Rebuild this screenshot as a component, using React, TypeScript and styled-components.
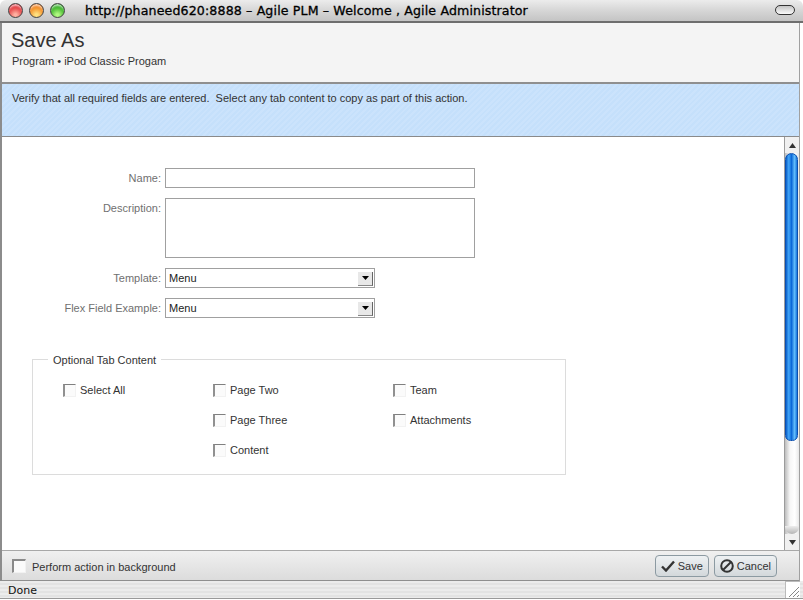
import React from "react";
import styled, { createGlobalStyle } from "styled-components";

const Global = createGlobalStyle`
  html, body { margin: 0; padding: 0; background: #fff; overflow: hidden; }
  body { font-family: "Liberation Sans", Arial, sans-serif; }
  * { box-sizing: border-box; }
`;

const Window = styled.div`
  width: 803px; height: 600px; display: flex; flex-direction: column;
  background: #fff; overflow: hidden; padding: 0 3px 1px 0;
`;
const TitleBar = styled.div`
  height: 23px; flex: none; margin-right: -3px; display: flex; align-items: center; padding: 0 7px 1px 8px;
  background: linear-gradient(#ececec, #d8d8d8 45%, #c4c4c4);
  border-bottom: 2px solid #6e6e6e; border-radius: 6px 6px 0 0;
`;
const Light = styled.span<{ $c: string; $d: string }>`
  width: 15px; height: 15px; border-radius: 50%; margin-right: 6px; flex: none;
  border: 1px solid #444;
  background: radial-gradient(circle at 50% 85%, ${p => p.$c} 10%, ${p => p.$d} 80%);
  box-shadow: inset 0 3px 2px -1px rgba(255,255,255,.7);
`;
const TitleText = styled.span`
  margin-left: 14px; font: 12.6px "DejaVu Sans", sans-serif; color: #000; letter-spacing: .13px;
  -webkit-text-stroke: .3px #000; white-space: nowrap; flex: 1;
`;
const Pill = styled.span`
  width: 20px; height: 10px; border: 1.5px solid #333; border-radius: 5px;
  background: linear-gradient(#c4c4c4, #fafafa); margin-right: 1px;
`;
const Inner = styled.div`
  flex: 1; display: flex; flex-direction: column; min-height: 0;
  border-left: 2px solid #8c8c8c; border-right: 1px solid #a0a0a0;
`;
const Header = styled.header`
  height: 61px; flex: none; background: #f4f4f4; padding: 5px 0 0 9px; border-bottom: 2px solid #8f8f8f;
`;
const Title = styled.h1`
  margin: 0; font-size: 20px; font-weight: 400; line-height: 24px; color: #333;
`;
const Crumb = styled.div`
  margin: 2px 0 0 1px; font-size: 11px; line-height: 14px; color: #333;
`;
const Banner = styled.div`
  height: 53px; flex: none; padding: 7px 10px; font-size: 11px; line-height: 14px; color: #333; white-space: pre;
  background: repeating-linear-gradient(135deg, #c5e0fb 0 2px, #cbe3fc 2px 4px);
  border-bottom: 1px solid #8a8a8a;
`;
const Body = styled.div`
  flex: 1; display: flex; min-height: 0;
`;
const Content = styled.main`
  flex: 1; padding: 31px 0 0 30px; min-width: 0;
`;
const FieldGrid = styled.div`
  display: grid; grid-template-columns: 129px auto; column-gap: 4px; row-gap: 10px; justify-content: start;
`;
const Label = styled.label`
  font-size: 11px; line-height: 20px; color: #707070; text-align: right; white-space: nowrap;
`;
const TextField = styled.div<{ $tall?: boolean }>`
  width: 310px; height: ${p => (p.$tall ? 60 : 20)}px; background: #fff; border: 1px solid #a0a0a0;
`;
const SelectBox = styled.div`
  width: 210px; height: 20px; background: #fff; border: 1px solid #a0a0a0; display: flex; align-items: center;
  justify-content: space-between; padding-left: 3px; font-size: 11px; color: #222; position: relative;
`;
const SelectArrow = styled.span`
  width: 15px; height: 14px; margin: 1px 1px 0 0; display: flex; align-items: center; justify-content: center;
  background: #e8e8e8; border-right: 1px solid #666; border-bottom: 1px solid #888;
`;
const Fieldset = styled.fieldset`
  width: 534px; height: 124px; margin: 33px 0 0; padding: 0; border: 1px solid #dcdcdc; display: block; position: relative;
`;
const Legend = styled.legend`
  margin-left: 15px; padding: 2px 5px 0; font-size: 11px; line-height: 14px; color: #333;
`;
const OptionGrid = styled.div`
  display: grid; grid-template-columns: 150px 180px auto; grid-auto-rows: 30px; padding: 16px 0 0 30px;
`;
const Option = styled.div<{ $col: number }>`
  grid-column: ${p => p.$col}; display: flex; align-items: center; gap: 4px; height: 14px;
  font-size: 11px; color: #333; white-space: nowrap;
`;
const Check = styled.span`
  width: 13px; height: 13px; flex: none; background: #fbfbfb;
  border-top: 1px solid #808080; border-left: 2px solid #909090; border-right: 1px solid #f2f2f2; border-bottom: 1px solid #f2f2f2;
`;
const Scrollbar = styled.aside`
  width: 15px; flex: none; display: flex; flex-direction: column; align-items: center;
  border-left: 1px solid #9c9c9c;
  background: linear-gradient(90deg, #bdbdbd, #f6f6f6 35%, #fff 70%, #e8e8e8);
`;
const ScrollButton = styled.div<{ $down?: boolean }>`
  height: 16px; width: 100%; flex: none; display: flex; align-items: center; justify-content: center; background: #f0f0f0;
  svg { transform: ${p => (p.$down ? "rotate(180deg)" : "none")}; }
`;
const Thumb = styled.div`
  width: 13px; height: 288px; flex: none; margin-right: 1px; border-radius: 7px 7px 6px 6px;
  border: 1px solid #0a4fb0;
  background: linear-gradient(90deg, #0a5ec8, #42a6f8 25%, #0c68d8 50%, #62bdfc 78%, #1673dc);
`;
const ThumbTrack = styled.div`
  flex: 1; width: 100%; display: flex; flex-direction: column; align-items: center;
`;
const TrackEnd = styled.div`
  margin-top: auto; height: 8px; width: 100%; border-radius: 0 0 7px 7px; background: linear-gradient(#ededed, #b4b4b4);
`;
const Footer = styled.footer`
  height: 31px; flex: none; display: flex; align-items: center; padding: 0 22px 0 10px;
  background: linear-gradient(#f0f0f0, #dcdcdc); border-top: 1px solid #a8a8a8; border-bottom: 1px solid #8f8f8f;
`;
const FooterCheck = styled(Check)`
  width: 14px; height: 14px; background: #fbfbfb; border-top: 2px solid #8a8a8a; border-left: 2px solid #8a8a8a;
`;
const FooterLabel = styled.span`
  margin-left: 6px; padding-top: 2px; flex: 1; font-size: 11px; color: #333;
`;
const Btn = styled.button`
  height: 22px; margin-left: 5px; padding: 0 5px; display: flex; align-items: center; gap: 3px;
  font: 11px "Liberation Sans", sans-serif; color: #333; border: 1px solid #8c9aa2; border-radius: 4px;
  background: linear-gradient(#eef1f3, #d3d8db);
`;
const StatusBar = styled.div`
  height: 18px; flex: none; margin-right: -3px; display: flex; align-items: center; justify-content: space-between;
  padding-left: 8px; font: 11px "DejaVu Sans", sans-serif; color: #111;
  background: repeating-linear-gradient(#ececec 0 2px, #e3e3e3 2px 4px);
  border-bottom: 1px solid #9a9a9a;
`;
const StatusText = styled.span`
  padding-top: 2px;
`;
const Grip = styled.span`
  width: 15px; height: 17px; margin-right: 3px; background: #fff; border-left: 1px solid #bbb; border-top: 1px solid #bbb; display: flex;
`;

const Tri = () => (
  <svg width="7" height="5" viewBox="0 0 7 5"><path d="M3.5 0 7 5H0z" fill="#333" /></svg>
);
const ArrowDown = () => (
  <svg width="7" height="4" viewBox="0 0 7 4"><path d="M0 0h7L3.5 4z" fill="#000" /></svg>
);

const options: [number, string][] = [
  [1, "Select All"], [2, "Page Two"], [3, "Team"],
  [2, "Page Three"], [3, "Attachments"], [2, "Content"],
];

export default function App() {
  return (
    <Window>
      <Global />
      <TitleBar>
        <Light $c="#ffb0a0" $d="#d8101c" />
        <Light $c="#ffe080" $d="#ee6a00" />
        <Light $c="#b0f880" $d="#109a08" />
        <TitleText>http://phaneed620:8888 – Agile PLM – Welcome , Agile Administrator</TitleText>
        <Pill />
      </TitleBar>
      <Inner>
        <Header>
          <Title>Save As</Title>
          <Crumb>Program • iPod Classic Progam</Crumb>
        </Header>
        <Banner>Verify that all required fields are entered.  Select any tab content to copy as part of this action.</Banner>
        <Body>
          <Content>
            <FieldGrid>
              <Label>Name:</Label>
              <TextField />
              <Label>Description:</Label>
              <TextField $tall />
              <Label>Template:</Label>
              <SelectBox>Menu<SelectArrow><ArrowDown /></SelectArrow></SelectBox>
              <Label>Flex Field Example:</Label>
              <SelectBox>Menu<SelectArrow><ArrowDown /></SelectArrow></SelectBox>
            </FieldGrid>
            <Fieldset>
              <Legend>Optional Tab Content</Legend>
              <OptionGrid>
                {options.map(([c, t]) => (
                  <Option key={t} $col={c}><Check />{t}</Option>
                ))}
              </OptionGrid>
            </Fieldset>
          </Content>
          <Scrollbar>
            <ScrollButton><Tri /></ScrollButton>
            <ThumbTrack>
              <Thumb />
              <TrackEnd />
            </ThumbTrack>
            <ScrollButton $down><Tri /></ScrollButton>
          </Scrollbar>
        </Body>
        <Footer>
          <FooterCheck />
          <FooterLabel>Perform action in background</FooterLabel>
          <Btn>
            <svg width="14" height="12" viewBox="0 0 14 12"><path d="M1 6.5 5 10.5 13 1.5" fill="none" stroke="#333" strokeWidth="2.4" /></svg>
            Save
          </Btn>
          <Btn>
            <svg width="14" height="14" viewBox="0 0 14 14"><circle cx="7" cy="7" r="5.8" fill="none" stroke="#333" strokeWidth="2" /><path d="M3 11 11 3" stroke="#333" strokeWidth="2" /></svg>
            Cancel
          </Btn>
        </Footer>
      </Inner>
      <StatusBar>
        <StatusText>Done</StatusText>
        <Grip><svg width="14" height="16" viewBox="0 0 14 16"><path d="M3 15 13 5M7 15 13 9M11 15 13 13" stroke="#888" /></svg></Grip>
      </StatusBar>
    </Window>
  );
}
